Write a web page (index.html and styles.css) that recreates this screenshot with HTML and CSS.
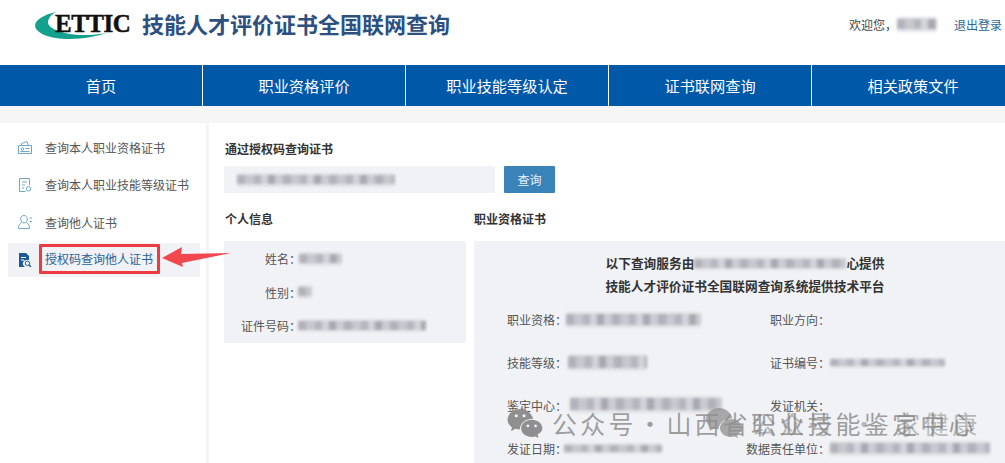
FILE: index.html
```html
<!DOCTYPE html>
<html lang="zh-CN">
<head>
<meta charset="utf-8">
<title>技能人才评价证书全国联网查询</title>
<link rel="stylesheet" href="styles.css">
</head>
<body>
<header class="top">
  <div class="brand">
    <div class="logo">
      <svg class="logo-arc" width="76" height="30" viewBox="0 0 76 30"><path d="M21 0C8 3 0 8 0 14c1 7 14 13 35 13 13 0 27-3 37-6-14 2.500-30 3-42 0C18 18 12 14 13 9c1-4 4-7 8-9z" fill="#13a08c"/></svg>
      <span class="logo-text">ETTIC</span>
    </div>
    <h1 class="site-title">技能人才评价证书全国联网查询</h1>
  </div>
  <div class="user">
    <span>欢迎您，</span><span class="blur blur-user"></span><a class="logout">退出登录</a>
  </div>
</header>
<nav class="nav">
  <a class="nav-item">首页</a>
  <a class="nav-item">职业资格评价</a>
  <a class="nav-item">职业技能等级认定</a>
  <a class="nav-item">证书联网查询</a>
  <a class="nav-item">相关政策文件</a>
</nav>
<div class="strip"></div>
<div class="main">
  <aside class="side">
    <div class="side-item">
      <svg class="ico" viewBox="0 0 14 14" fill="none" stroke="#6ea6c8"><path d="M.5 4.500h13v8H.5z"/><path d="M3.500 4.500V2.500l5.500-2 1.500 4"/><circle cx="4.500" cy="8" r="1.300"/><path d="M7.500 7.500h4M2.500 10.500h9"/></svg>
      <span>查询本人职业资格证书</span>
    </div>
    <div class="side-item">
      <svg class="ico" viewBox="0 0 14 14" fill="none" stroke="#6ea6c8"><path d="M11.500 7V.5h-10v13h6"/><path d="M4 4h5M4 7h3M4 10h2"/><circle cx="10.500" cy="10.800" r="2.200"/></svg>
      <span>查询本人职业技能等级证书</span>
    </div>
    <div class="side-item">
      <svg class="ico" viewBox="0 0 14 14" fill="none" stroke="#6ea6c8"><path d="M6 .5c2 0 3.300 1.500 3.300 3.500S8 8 6 8 2.700 6 2.700 4 4 .5 6 .5z"/><path d="M3.500 7.500C1.500 9 .5 10.500.5 13.500h11c0-3-1-4.500-3-6"/><path d="M11.500 3h2.500M12 6.500h2"/></svg>
      <span>查询他人证书</span>
    </div>
    <div class="side-item side-active">
      <svg class="ico" viewBox="0 0 14 14"><path d="M1 0h7l3 3v4H8a3.500 3.500 0 0 0-1.500 6.500V14H1z" fill="#1c5b9a"/><path d="M3 4.500h5M3 7h3" stroke="#fff"/><circle cx="9.500" cy="10.300" r="2.200" fill="none" stroke="#1c5b9a"/><path d="M11 12l2 2" stroke="#1c5b9a" stroke-width="1.300"/></svg>
      <span class="side-label">授权码查询他人证书</span>
      <svg class="arrow" width="72" height="24" viewBox="0 0 72 24"><path d="M0 13L20 2l-1 7 50-1-49 10 1 4z" fill="#f2474e"/></svg>
    </div>
  </aside>
  <section class="content">
    <h2 class="h">通过授权码查询证书</h2>
    <div class="query">
      <div class="input"><span class="blur blur-code"></span></div>
      <button class="btn">查询</button>
    </div>
    <div class="cols">
      <div class="col-left">
        <h2 class="h h-left">个人信息</h2>
        <div class="panel person">
          <div class="p-row"><span class="p-label">姓名：</span><span class="blur blur-name"></span></div>
          <div class="p-row"><span class="p-label">性别：</span><span class="blur blur-sex"></span></div>
          <div class="p-row"><span class="p-label">证件号码：</span><span class="blur blur-id"></span></div>
        </div>
      </div>
      <div class="col-right">
        <h2 class="h">职业资格证书</h2>
        <div class="panel cert">
          <p class="notice">以下查询服务由<span class="blur blur-org"></span>心提供</p>
          <p class="notice">技能人才评价证书全国联网查询系统提供技术平台</p>
          <div class="grid">
            <div class="g-row"><span class="g-l">职业资格：</span><span class="blur blur-a"></span></div>
            <div class="g-row"><span class="g-l2">职业方向：</span></div>
            <div class="g-row"><span class="g-l">技能等级：</span><span class="blur blur-b"></span></div>
            <div class="g-row"><span class="g-l2">证书编号：</span><span class="blur blur-c"></span></div>
            <div class="g-row"><span class="g-l">鉴定中心：</span><span class="blur blur-d"></span></div>
            <div class="g-row"><span class="g-l2">发证机关：</span></div>
            <div class="g-row"><span class="g-l">发证日期：</span><span class="blur blur-e"></span></div>
            <div class="g-row"><span class="g-l2">数据责任单位：</span><span class="blur blur-f"></span></div>
          </div>
        </div>
      </div>
    </div>
  </section>
</div>
<div class="mark">
  <svg class="mark-ico" width="38" height="29" viewBox="0 0 36 30"><path d="M13 0C6 0 0 5 0 11c0 3.500 2 6 4.500 8L3.500 23l4.500-2.500c1.500.5 3 .7 4.500.7 1-7 6-11 14-11C24.500 4 19 0 13 0z" fill="#8f8f8f"/><path d="M25 11c-6 0-11 4-11 9s5 9 11 9c1.300 0 2.500-.2 3.500-.5L32 30l-1-3.500c3-1.600 5-4 5-6.500 0-5-5-9-11-9z" fill="#8f8f8f"/><g fill="#f0f2f5"><circle cx="9" cy="7" r="1.600"/><circle cx="17" cy="7" r="1.600"/><circle cx="21" cy="17.500" r="1.400"/><circle cx="29" cy="17.500" r="1.400"/></g></svg>
  <span class="mark-text">公众号 · 山西省职业技能鉴定中心</span>
  <svg class="mark-ico mark-ico2" width="38" height="30" viewBox="0 0 36 30"><path d="M13 0C6 0 0 5 0 11c0 3.500 2 6 4.500 8L3.500 23l4.500-2.500c1.500.5 3 .7 4.500.7 1-7 6-11 14-11C24.500 4 19 0 13 0z" fill="#8f8f8f"/><path d="M25 11c-6 0-11 4-11 9s5 9 11 9c1.300 0 2.500-.2 3.500-.5L32 30l-1-3.500c3-1.600 5-4 5-6.500 0-5-5-9-11-9z" fill="#8f8f8f"/></svg>
  <span class="mark-text mark-b">公众号 · 家健康</span>
</div>
</body>
</html>
```
FILE: styles.css
```css
* { box-sizing: border-box; }
html, body { margin: 0; height: 463px; overflow: hidden; background: #fff; }
body { font-family: "Noto Sans CJK SC", "Liberation Sans", sans-serif; font-size: 12px; color: #555; position: relative; }
h1, h2, p { margin: 0; }

.top { height: 65px; display: flex; justify-content: space-between; }
.brand { display: flex; align-items: flex-start; padding: 8px 0 0 35px; }
.logo { width: 107px; height: 32px; position: relative; }
.logo-arc { position: absolute; left: 0; top: 4px; }
.logo-text { position: absolute; left: 20px; top: 1px; font: bold 25px/30px "Liberation Serif", serif; color: #111; letter-spacing: -.5px; -webkit-text-stroke: .5px #111; }
.site-title { font-size: 22px; line-height: 30px; font-weight: 700; color: #2d5080; }
.user { display: flex; align-items: center; height: 48px; color: #444; }
.blur { display: inline-block; flex: none; border-radius: 3px; background: linear-gradient(180deg, #e2e3e7 0 14%, transparent 14% 82%, #e2e3e7 82%), repeating-linear-gradient(90deg, #aeaeb7 0 8px, #c4c6cc 8px 17px, #b2b3bb 17px 24px, #d0d2d7 24px 31px, #a4a5ad 31px 38px, #c8cad0 38px 46px); filter: blur(1.6px); opacity: .95; }
.blur-user { width: 40px; height: 15px; }
.logout { color: #2d6596; margin-left: 17px; margin-right: 3px; }

.nav { height: 41px; background: #0058a8; display: flex; width: 1015px; }
.nav-item { width: 203px; flex: none; border-right: 1px solid #fff; color: #fff; font-size: 15.200px; line-height: 41px; text-align: center; }
.strip { height: 17px; background: #f5f5f5; }

.main { display: flex; height: 340px; }
.side { width: 209px; flex: none; border-right: 3px solid #f5f5f5; padding: 6px 6px 0 8px; }
.side-item { height: 37.300px; display: flex; align-items: center; padding-left: 10px; gap: 13px; position: relative; }
.ico { width: 14px; height: 14px; flex: none; }
.side-active { height: 34px; margin-top: 2px; background: #f0f2f5; color: #2a6296; gap: 7px; }
.side-label { border: 3px solid #ee3b41; border-radius: 1px; padding: 0 4px 0 3px; height: 30px; line-height: 24px; margin-bottom: 2px; position: relative; }
.arrow { position: absolute; left: 154px; top: 2px; }

.content { flex: 1; padding: 19px 0 0 15px; min-width: 0; }
.h { font-size: 12px; line-height: 14px; font-weight: 700; color: #333; }
.content > .h, .h-left { padding-left: 1px; }
.query { display: flex; gap: 9px; margin-top: 10px; }
.input { width: 271px; height: 27px; background: #f0f2f5; display: flex; align-items: center; padding-left: 13px; }
.blur-code { width: 158px; height: 14px; }
.btn { width: 51px; height: 27px; background: #3a83b8; color: #eaf2f8; border: 0; border-radius: 1px; padding: 0; font: 12px "Noto Sans CJK SC", sans-serif; }
.cols { display: flex; gap: 8px; margin-top: 19px; }
.col-left { width: 242px; flex: none; }
.col-right { flex: 1; min-width: 0; }
.panel { background: #f0f2f5; margin-top: 15px; }
.person { height: 102px; display: flex; flex-direction: column; padding-top: 1px; }
.p-row { height: 33.500px; display: flex; align-items: center; }
.p-label { width: 77px; text-align: right; }
.blur-name { width: 43px; height: 14px; margin-left: -2px; }
.blur-sex { width: 14px; height: 14px; margin-left: -3px; }
.blur-id { width: 128px; height: 13px; margin-left: -3px; }

.cert { height: 222px; padding-top: 10px; width: 542px; }
.notice { font-weight: 700; font-size: 12.700px; line-height: 23px; color: #333; text-align: center; }
.blur-org { width: 152px; height: 13px; vertical-align: -2px; }
.grid { display: grid; grid-template-columns: 249px 1fr; margin-top: 1px; }
.g-row { height: 43px; display: flex; align-items: center; }
.g-l { padding-left: 33px; width: 92px; white-space: nowrap; }
.g-l2 { width: 107px; text-align: right; white-space: nowrap; }
.blur-a { width: 135px; height: 16px; }
.blur-b { width: 79px; height: 17px; margin-left: 2px; }
.blur-c { width: 115px; height: 10px; }
.blur-d { width: 152px; height: 17px; margin-left: 4px; margin-top: -2px; }
.blur-e { width: 98px; height: 11px; margin-left: -2px; }
.blur-f { width: 160px; height: 15px; }

.mark { position: absolute; left: 0; top: 0; width: 1005px; height: 463px; pointer-events: none; }
.mark-ico { position: absolute; left: 506px; top: 409px; }
.mark-ico2 { left: 705px; top: 408px; opacity: .75; }
.mark-text { position: absolute; left: 552px; top: 405px; font-size: 25px; line-height: 36px; letter-spacing: 3.200px; word-spacing: -8px; color: rgba(125,125,125,.72); white-space: nowrap; }
.mark-b { left: 751px; letter-spacing: 3.500px; word-spacing: 6px; color: rgba(125,125,125,.5); }
```
